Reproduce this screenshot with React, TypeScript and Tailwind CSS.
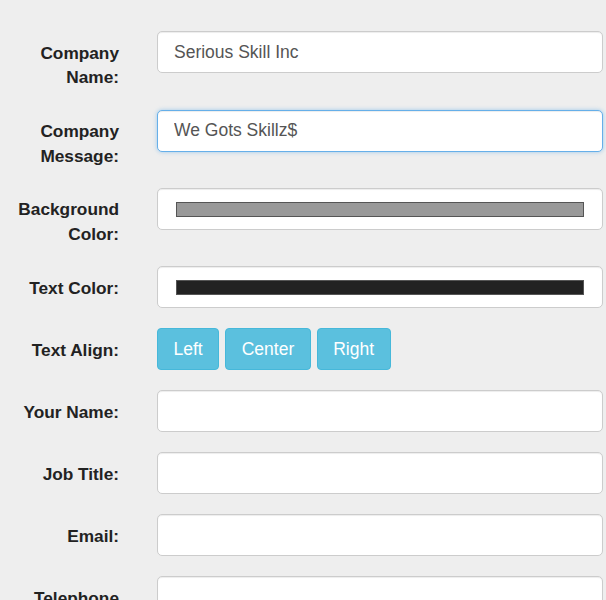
import React from 'react'

const labelCls = 'pt-[9.33px] pl-[15px] pr-[1px] text-right text-[17.25px] leading-[24.5px] font-bold text-[#222]'
const inputCls =
  'h-[42px] w-full rounded-[5px] border border-[#ccc] bg-white px-[16px] text-[17.5px] text-[#555] shadow-[inset_0_1px_1px_rgba(0,0,0,0.075)] outline-none'

const Swatch = ({ color }: { color: string }) => (
  <div className="flex h-[42px] w-full items-center rounded-[5px] border border-[#ccc] bg-white px-[18px] shadow-[inset_0_1px_1px_rgba(0,0,0,0.075)]">
    <div className="h-[15px] w-full border border-[#555]" style={{ backgroundColor: color }} />
  </div>
)

const App = () => {
  return (
    <div
      className="min-h-[600px] w-[606px] overflow-hidden bg-[#eeeeee] pt-[31.4px] pr-[3px]"
      style={{ fontFamily: '"Liberation Sans", Arial, sans-serif' }}
    >
      <div className="grid grid-cols-[120px_1fr] gap-x-[37px] gap-y-[20px]">
        <label className={labelCls}>Company Name:</label>
        <input className={inputCls} defaultValue="Serious Skill Inc" />

        <label className={labelCls}>Company Message:</label>
        <input
          className={inputCls + ' !border-[#66afe9] !shadow-[inset_0_1px_1px_rgba(0,0,0,0.075),0_0_4px_rgba(102,175,233,0.6)]'}
          defaultValue="We Gots Skillz$"
        />

        <label className={labelCls}>Background Color:</label>
        <Swatch color="#999999" />

        <label className={labelCls}>Text Color:</label>
        <Swatch color="#222222" />

        <label className={labelCls}>Text Align:</label>
        <div className="flex gap-[6px]">
          {['Left', 'Center', 'Right'].map((t) => (
            <button
              key={t}
              className="h-[42px] rounded-[4px] border border-[#46b8da] bg-[#5bc0de] px-[15.5px] text-[17.5px] text-white"
            >
              {t}
            </button>
          ))}
        </div>

        <label className={labelCls}>Your Name:</label>
        <input className={inputCls} />

        <label className={labelCls}>Job Title:</label>
        <input className={inputCls} />

        <label className={labelCls}>Email:</label>
        <input className={inputCls} />

        <label className={labelCls}>Telephone Number:</label>
        <input className={inputCls} />
      </div>
    </div>
  )
}

export default App
